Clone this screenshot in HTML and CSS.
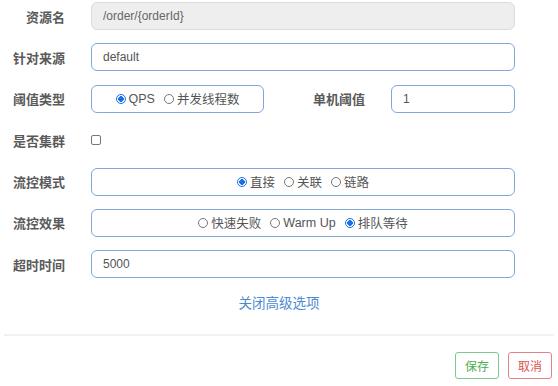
FILE: index.html
```html
<!DOCTYPE html>
<html lang="zh-CN">
  <head>
    <meta charset="UTF-8" />
    <meta name="viewport" content="width=device-width, initial-scale=1.0" />
    <title>编辑流控规则</title>
    <link rel="stylesheet" href="styles.css">
  </head>
  <body>
    <form class="rule-form">
      <div class="form-row">
        <label class="form-label">资源名</label>
        <input class="form-input is-disabled" type="text" value="/order/{orderId}" disabled />
      </div>

      <div class="form-row">
        <label class="form-label">针对来源</label>
        <input class="form-input" type="text" value="default" />
      </div>

      <div class="form-row">
        <label class="form-label">阈值类型</label>
        <div class="split">
          <div class="radio-box radio-box--small">
            <label class="radio"><input type="radio" name="grade" checked /> QPS</label>
            <label class="radio"><input type="radio" name="grade" /> 并发线程数</label>
          </div>
          <label class="form-label split-label">单机阈值</label>
          <input class="form-input split-input" type="text" value="1" />
        </div>
      </div>

      <div class="form-row">
        <label class="form-label">是否集群</label>
        <div><input class="checkbox" type="checkbox" /></div>
      </div>

      <div class="form-row">
        <label class="form-label">流控模式</label>
        <div class="radio-box">
          <label class="radio"><input type="radio" name="strategy" checked /> 直接</label>
          <label class="radio"><input type="radio" name="strategy" /> 关联</label>
          <label class="radio"><input type="radio" name="strategy" /> 链路</label>
        </div>
      </div>

      <div class="form-row">
        <label class="form-label">流控效果</label>
        <div class="radio-box">
          <label class="radio"><input type="radio" name="behavior" /> 快速失败</label>
          <label class="radio"><input type="radio" name="behavior" /> Warm Up</label>
          <label class="radio"><input type="radio" name="behavior" checked /> 排队等待</label>
        </div>
      </div>

      <div class="form-row">
        <label class="form-label">超时时间</label>
        <input class="form-input" type="text" value="5000" />
      </div>

      <div class="advanced">
        <a class="advanced-link" href="#">关闭高级选项</a>
      </div>
    </form>

    <hr class="divider" />

    <!-- 底部按钮 -->
    <div class="footer">
      <button class="btn btn-save" type="button">保存</button>
      <button class="btn btn-cancel" type="button">取消</button>
    </div>
  </body>
</html>
```

FILE: styles.css
```css
/* 전체 */
body {
  margin: 0;
  font-family: "Liberation Sans", "Noto Sans CJK SC", sans-serif;
  color: #555;
  background: #fff;
}

.rule-form {
  padding-top: 2px;
}

/* 한 줄 */
.form-row {
  display: grid;
  grid-template-columns: 65px 424px;
  column-gap: 26px;
  align-items: center;
  height: 28px;
  margin-bottom: 13.4px;
}

.form-label {
  text-align: right;
  font-size: 13px;
  font-weight: bold;
  color: #5a5a5a;
  white-space: nowrap;
}

.form-input {
  box-sizing: border-box;
  height: 28px;
  width: 100%;
  padding: 0 11px;
  border: 1px solid #7ea9d9;
  border-radius: 6px;
  font-family: inherit;
  font-size: 12px;
  color: #555;
  background: #fff;
  outline: none;
}

.form-input.is-disabled {
  background: #eee;
  border-color: #dcdcdc;
  color: #666;
}

/* 阈值类型 + 单机阈值 */
.split {
  display: flex;
  align-items: center;
}

.split-label {
  flex: 1;
  margin-right: 26px;
}

.split-input {
  width: 124px;
}

/* 라디오 박스 */
.radio-box {
  box-sizing: border-box;
  height: 28px;
  display: flex;
  align-items: center;
  justify-content: center;
  gap: 9px;
  border: 1px solid #7ea9d9;
  border-radius: 6px;
  font-size: 12.5px;
  color: #555;
}

.radio-box--small {
  width: 173px;
}

.radio {
  display: flex;
  align-items: center;
  gap: 3px;
  white-space: nowrap;
}

.radio input {
  appearance: none;
  box-sizing: border-box;
  width: 10px;
  height: 10px;
  margin: 0;
  border: 1px solid #777;
  border-radius: 50%;
  background: #fff;
}

.radio input:checked {
  border-color: #1a6fe8;
  background: radial-gradient(circle, #1a6fe8 0 2.6px, #fff 3px);
}

.checkbox {
  appearance: none;
  display: block;
  box-sizing: border-box;
  width: 10px;
  height: 10px;
  margin: 0;
  border: 1px solid #777;
  border-radius: 2px;
  background: #fff;
}

/* 고급 옵션 링크 */
.advanced {
  text-align: center;
}

.advanced-link {
  font-size: 13.5px;
  color: #4a8ad0;
  text-decoration: none;
}

.divider {
  margin: 22px 4px 0;
  height: 2px;
  border: none;
  background: #f2f2f2;
}

/* 버튼 */
.footer {
  display: flex;
  justify-content: flex-end;
  gap: 9px;
  padding: 16px 6px 0 0;
}

.btn {
  height: 27px;
  padding: 0 9px;
  border-radius: 3px;
  background: #fff;
  font-family: inherit;
  font-size: 12px;
  cursor: pointer;
}

.btn-save {
  border: 1px solid #7cc98a;
  color: #4cae4c;
}

.btn-cancel {
  border: 1px solid #e8808a;
  color: #d9534f;
}
```
